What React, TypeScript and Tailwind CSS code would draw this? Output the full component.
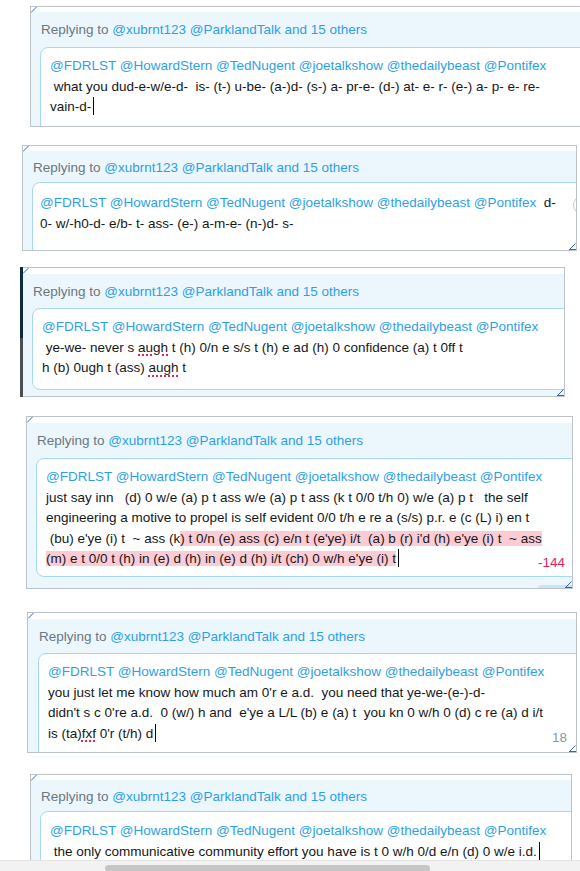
import React from "react";

const BLUE = "text-[#2d9fe8]";

function Mentions() {
  return (
    <span className={BLUE}>
      @FDRLST @HowardStern @TedNugent @joetalkshow @thedailybeast @Pontifex
    </span>
  );
}

function Header() {
  return (
    <div className="pl-[1px] leading-[20px] text-[#6b7780] whitespace-pre">
      Replying to <span className={BLUE}>@xubrnt123 @ParklandTalk and 15 others</span>
    </div>
  );
}

function Cursor() {
  return <span className="inline-block w-px h-[18px] bg-black align-[-4px] ml-[2px]" />;
}

function Spell({ children }: { children: React.ReactNode }) {
  return (
    <span className="underline decoration-dotted decoration-[#e0245e] decoration-[1.5px] underline-offset-[3px]">
      {children}
    </span>
  );
}

function TopCorner() {
  return (
    <svg className="absolute left-0 top-0" width="6" height="6" viewBox="0 0 6 6">
      <line x1="0" y1="5.5" x2="5.5" y2="0" stroke="#2f63c6" strokeWidth="1" />
    </svg>
  );
}

function BottomCorner() {
  return (
    <svg className="absolute right-0 bottom-0" width="7" height="7" viewBox="0 0 7 7">
      <line x1="0.5" y1="6.5" x2="6.5" y2="0.5" stroke="#2f63c6" strokeWidth="1" />
      <line x1="0" y1="6.5" x2="7" y2="6.5" stroke="#2f63c6" strokeWidth="1" />
    </svg>
  );
}

function Line({ children }: { children: React.ReactNode }) {
  return <div className="whitespace-pre leading-[20.5px]">{children}</div>;
}

export default function App() {
  return (
    <div className="relative w-[580px] h-[871px] overflow-hidden bg-white pt-[6px] flex flex-col font-['Liberation_Sans',Arial,sans-serif] text-[13.5px] text-[#14171a]">
      {/* Panel 1 */}
      <div className="relative shrink-0 ml-[30px] w-[560px] h-[121px] border border-[#bcc3c9] bg-white overflow-hidden">
        <div className="mt-[5px] h-full bg-[#ecf6fd] pl-[9px] pt-[8px]">
          <Header />
          <div className="mt-[7px] -mr-[14px] h-[200px] rounded-[8px] border border-[#a6d7f4] bg-white pl-[9px] pt-[8px]">
            <Line><Mentions /></Line>
            <Line> what you dud-e-w/e-d-  is- (t-) u-be- (a-)d- (s-) a- pr-e- (d-) at- e- r- (e-) a- p- e- re-</Line>
            <Line>vain-d-<Cursor /></Line>
          </div>
        </div>
        <TopCorner />
      </div>

      {/* Panel 2 */}
      <div className="relative shrink-0 mt-[18px] ml-[22px] w-[555px] h-[106px] border border-[#bcc3c9] bg-white overflow-hidden">
        <div className="mt-[5px] h-full bg-[#ecf6fd] pl-[9px] pt-[7px]">
          <Header />
          <div className="mt-[4px] -mr-[14px] h-[200px] rounded-[8px] border border-[#a6d7f4] bg-white pl-[7px] pt-[10px]">
            <Line><Mentions />  d-</Line>
            <Line>0- w/-h0-d- e/b- t- ass- (e-) a-m-e- (n-)d- s-</Line>
          </div>
        </div>
        <div className="absolute left-[550px] top-[50px] w-[18px] h-[18px] rounded-full border border-[#c5cbd0] bg-white" />
        <TopCorner />
        <BottomCorner />
      </div>

      {/* Panel 3 */}
      <div className="shrink-0 mt-[16px] ml-[20px] flex h-[130px]">
        <div className="w-[3px] flex flex-col">
          <div className="h-[71px] bg-[#0f2c3f]" />
          <div className="flex-1 bg-[#4b4f52]" />
        </div>
        <div className="relative w-[542px] h-[130px] border border-l-0 border-[#bcc3c9] bg-white overflow-hidden">
          <div className="mt-[6px] h-full bg-[#ecf6fd] pl-[9px] pt-[8px]">
            <Header />
            <div className="mt-[6px] -mr-[14px] h-[82px] rounded-[8px] border border-[#a6d7f4] bg-white pl-[9px] pt-[8px]">
              <Line><Mentions /></Line>
              <Line> ye-we- never s <Spell>augh</Spell> t (h) 0/n e s/s t (h) e ad (h) 0 confidence (a) t 0ff t</Line>
              <Line>h (b) 0ugh t (ass) <Spell>augh</Spell> t</Line>
            </div>
          </div>
          <TopCorner />
          <BottomCorner />
        </div>
      </div>

      {/* Panel 4 */}
      <div className="relative shrink-0 mt-[19px] ml-[26px] w-[547px] h-[173px] border border-[#bcc3c9] bg-white overflow-hidden">
        <div className="mt-[6px] h-full bg-[#ecf6fd] pl-[9px] pt-[8px]">
          <Header />
          <div className="mt-[7px] -mr-[14px] h-[119px] rounded-[8px] border border-[#a6d7f4] bg-white pl-[9px] pt-[8px]">
            <Line><Mentions /></Line>
            <Line>just say inn   (d) 0 w/e (a) p t ass w/e (a) p t ass (k t 0/0 t/h 0) w/e (a) p t   the self</Line>
            <Line>engineering a motive to propel is self evident 0/0 t/h e re a (s/s) p.r. e (c (L) i) en t</Line>
            <Line> (bu) e'ye (i) t  ~ ass (k<span className="bg-[#fccbd4]">) t 0/n (e) ass (c) e/n t (e'ye) i/t  (a) b (r) i'd (h) e'ye (i) t  ~ ass</span></Line>
            <Line><span className="bg-[#fccbd4]">(m) e t 0/0 t (h) in (e) d (h) in (e) d (h) i/t (ch) 0 w/h e'ye (i) t</span><Cursor /></Line>
          </div>
        </div>
        <div className="absolute right-[7px] top-[136px] leading-[20px] text-[#e0245e]">-144</div>
        <div className="absolute right-0 bottom-0 w-[34px] h-[3px] rounded-tl-[4px] bg-[#c9e6f9]" />
        <TopCorner />
        <BottomCorner />
      </div>

      {/* Panel 5 */}
      <div className="relative shrink-0 mt-[23px] ml-[27px] w-[550px] h-[141px] border border-[#bcc3c9] bg-white overflow-hidden">
        <div className="mt-[6px] h-full bg-[#ecf6fd] pl-[10px] pt-[8px]">
          <Header />
          <div className="mt-[6px] -mr-[14px] h-[200px] rounded-[8px] border border-[#a6d7f4] bg-white pl-[9px] pt-[8px]">
            <Line><Mentions /></Line>
            <Line>you just let me know how much am 0'r e a.d.  you need that ye-we-(e-)-d-</Line>
            <Line>didn't s c 0're a.d.  0 (w/) h and  e'ye a L/L (b) e (a) t  you kn 0 w/h 0 (d) c re (a) d i/t</Line>
            <Line>is (ta)<Spell>fxf</Spell> 0'r (t/h) d<Cursor /></Line>
          </div>
        </div>
        <div className="absolute right-[9px] top-[115px] leading-[20px] text-[#8a98a3]">18</div>
        <TopCorner />
        <BottomCorner />
      </div>

      {/* Panel 6 */}
      <div className="relative shrink-0 mt-[21px] ml-[30px] w-[542px] h-[120px] border border-[#bcc3c9] bg-white overflow-hidden">
        <div className="mt-[5px] h-full bg-[#ecf6fd] pl-[9px] pt-[7px]">
          <Header />
          <div className="mt-[4px] -mr-[14px] h-[200px] rounded-[8px] border border-[#a6d7f4] bg-white pl-[9px] pt-[9px]">
            <Line><Mentions /></Line>
            <Line> the only communicative community effort you have is t 0 w/h 0/d e/n (d) 0 w/e i.d.<Cursor /></Line>
          </div>
        </div>
        <TopCorner />
      </div>

      {/* horizontal scrollbar overlay */}
      <div className="absolute left-0 right-0 bottom-0 h-[11px] bg-[#f2f2f2] border-t border-[#e4e4e4]">
        <div className="absolute left-[105px] w-[325px] top-[4px] h-[7px] rounded-full bg-[#c6c6c6]" />
      </div>
    </div>
  );
}
